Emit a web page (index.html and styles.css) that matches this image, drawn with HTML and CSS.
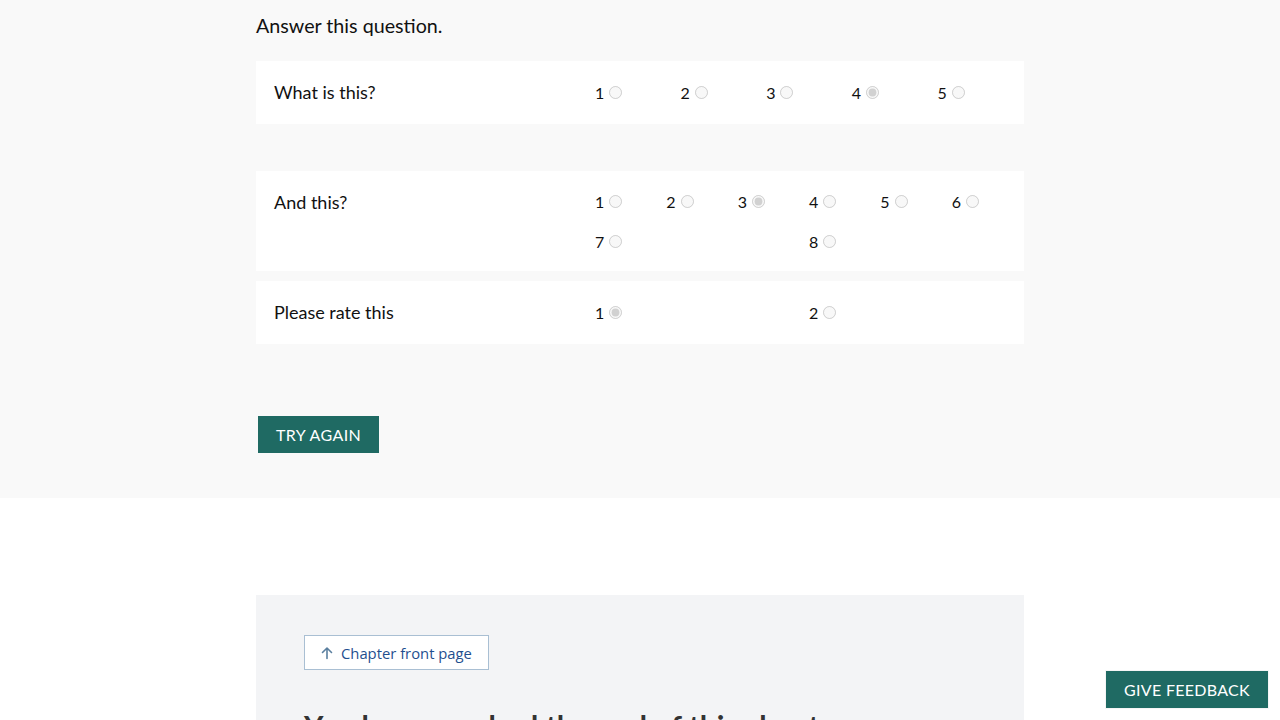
FILE: index.html
```html
<!DOCTYPE html>
<html lang="en">
<head>
<meta charset="utf-8">
<title>Answer this question</title>
<link rel="stylesheet" href="styles.css">
</head>
<body>
<section class="quiz">
  <div class="container">
    <h2 class="quiz-title">Answer this question.</h2>

    <div class="card card-single card-first">
      <div class="question">What is this?</div>
      <div class="options">
        <label class="option">1<input type="radio" name="q1" disabled></label>
        <label class="option">2<input type="radio" name="q1" disabled></label>
        <label class="option">3<input type="radio" name="q1" disabled></label>
        <label class="option">4<input type="radio" name="q1" checked disabled></label>
        <label class="option">5<input type="radio" name="q1" disabled></label>
      </div>
    </div>

    <div class="card">
      <div class="question">And this?</div>
      <div class="options">
        <label class="option">1<input type="radio" name="q2" disabled></label>
        <label class="option">2<input type="radio" name="q2" disabled></label>
        <label class="option">3<input type="radio" name="q2" checked disabled></label>
        <label class="option">4<input type="radio" name="q2" disabled></label>
        <label class="option">5<input type="radio" name="q2" disabled></label>
        <label class="option">6<input type="radio" name="q2" disabled></label>
        <label class="option">7<input type="radio" name="q2" disabled></label>
        <label class="option">8<input type="radio" name="q2" disabled></label>
      </div>
    </div>

    <div class="card card-single">
      <div class="question">Please rate this</div>
      <div class="options">
        <label class="option">1<input type="radio" name="q3" checked disabled></label>
        <label class="option">2<input type="radio" name="q3" disabled></label>
      </div>
    </div>

    <div class="actions">
      <button class="btn-primary" type="button">Try again</button>
    </div>
  </div>
</section>

<section class="chapter-end">
  <div class="container end-box">
    <a class="front-link" href="#">
      <svg class="front-icon" width="14" height="14" viewBox="0 0 14 14" aria-hidden="true">
        <path d="M7 12.5V2M2.5 6.5L7 2l4.5 4.5" fill="none" stroke="#5a7f9f" stroke-width="1.6" stroke-linecap="round" stroke-linejoin="round"/>
      </svg>
      <span>Chapter front page</span>
    </a>
    <h2 class="end-title">You have reached the end of this chapter</h2>
  </div>
</section>

<button class="feedback" type="button">Give feedback</button>
</body>
</html>
```

FILE: styles.css
```css
html, body {
  margin: 0;
  padding: 0;
}

body {
  font-family: Lato, "Liberation Sans", sans-serif;
  color: #111;
  background: #ffffff;
}

.container {
  width: 768px;
  margin: 0 auto;
  box-sizing: border-box;
}

.quiz {
  background: #f9f9f9;
  padding-bottom: 45px;
}

.quiz-title {
  margin: 0;
  padding: 14px 0 23px;
  font-size: 19.7px;
  font-weight: 400;
  line-height: 24px;
  color: #111;
}

.card {
  background: #ffffff;
  display: grid;
  grid-template-columns: 321px 428px;
  padding: 10px 1px 10px 18px;
  margin-bottom: 10px;
}

.card-first {
  margin-bottom: 47px;
}

.question {
  font-size: 18px;
  line-height: 43px;
  color: #111;
}

.options {
  display: flex;
  flex-wrap: wrap;
}

.option {
  flex: 1 0 66px;
  display: flex;
  align-items: center;
  height: 40px;
  font-size: 16px;
  color: #111;
}

.card-single .option {
  padding-top: 1px;
  box-sizing: border-box;
  height: 41px;
}

.option input {
  margin: 0 0 0 5px;
  width: 13px;
  height: 13px;
}

.actions {
  padding: 62px 0 0 2px;
}

.btn-primary {
  background: #1f6a63;
  color: #ffffff;
  border: 0;
  font-family: Lato, "Liberation Sans", sans-serif;
  font-size: 16px;
  text-transform: uppercase;
  height: 37px;
  padding: 0 18px;
  letter-spacing: 0.4px;
}

.chapter-end {
  padding-top: 97px;
}

.end-box {
  background: #f3f4f6;
  padding: 40px 48px 20px;
  min-height: 200px;
}

.front-link {
  display: inline-flex;
  align-items: center;
  gap: 7px;
  height: 35px;
  box-sizing: border-box;
  padding: 0 16px 0 15px;
  background: #ffffff;
  border: 1px solid #a9bfd3;
  color: #1f4f8f;
  text-decoration: none;
  font-family: "Open Sans", "Liberation Sans", sans-serif;
  font-size: 14.8px;
}

.end-title {
  margin: 36px 0 0;
  font-size: 30px;
  font-weight: 700;
  color: #333;
  line-height: 40px;
}

.feedback {
  position: fixed;
  right: 12px;
  bottom: 12px;
  height: 37px;
  padding: 0 18px;
  background: #1f6a63;
  color: #ffffff;
  border: 0;
  outline: 1px solid #f5f5f5;
  font-family: Lato, "Liberation Sans", sans-serif;
  font-size: 16px;
  text-transform: uppercase;
  letter-spacing: 0.3px;
}
```
